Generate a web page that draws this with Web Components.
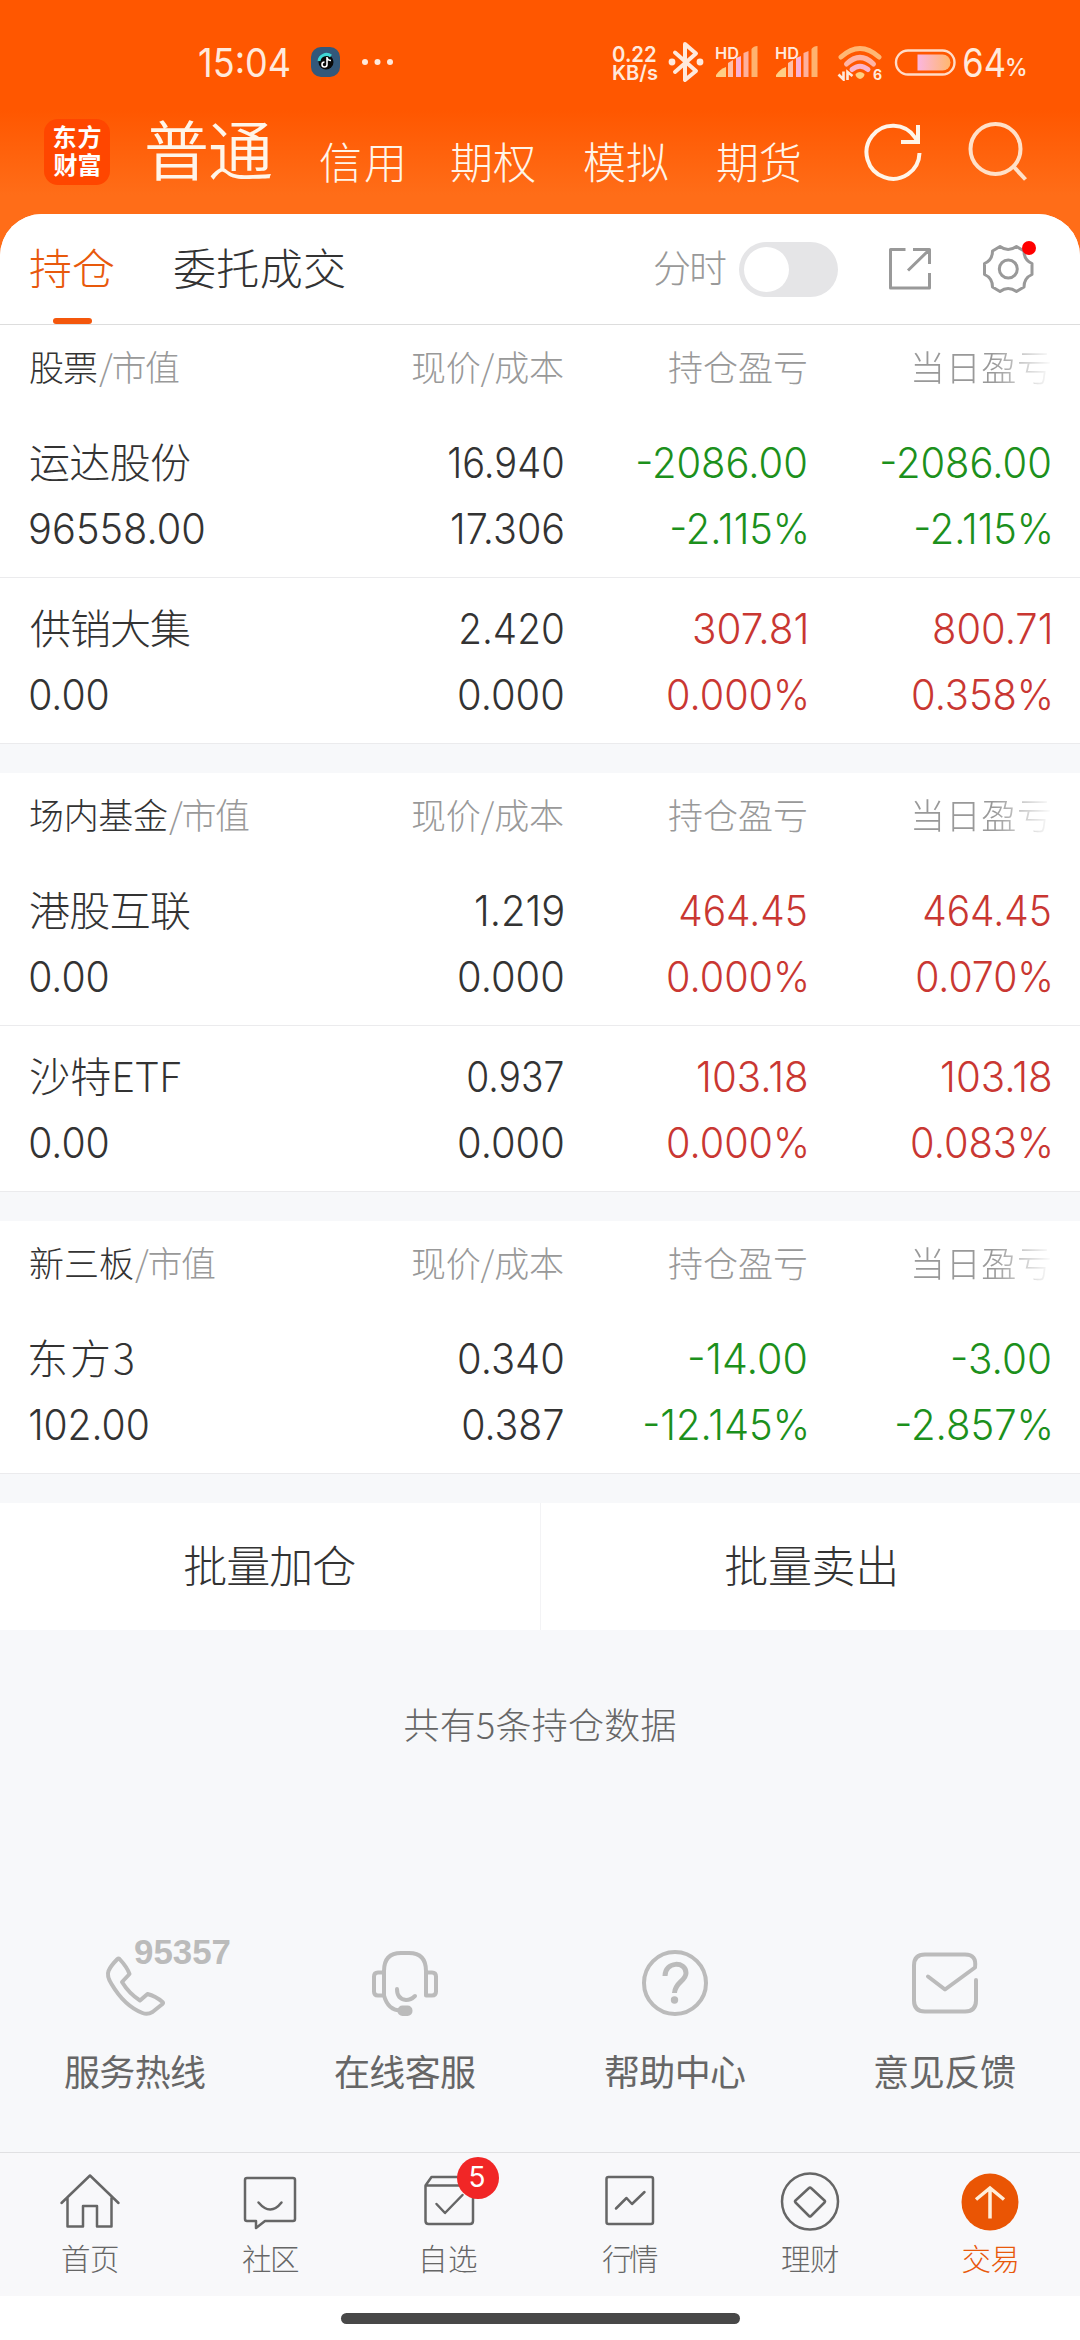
<!DOCTYPE html>
<html lang="zh-CN">
<head>
<meta charset="utf-8">
<title>交易</title>
<style>
    body {
        margin: 0;
        font-family: "Noto Sans CJK SC", sans-serif;
        font-weight: 300;
        color: #333;
        background: #fff;
    }
</style>
</head>
<body>
<trade-page></trade-page>

<script>
const define = (name, html, setup) => {
    const template = document.createElement('template');
    template.innerHTML = html;
    customElements.define(name, class extends HTMLElement {
        constructor() {
            super();
            this.attachShadow({ mode: 'open' }).appendChild(template.content.cloneNode(true));
        }
        connectedCallback() {
            if (setup) setup(this, this.shadowRoot);
        }
    });
};

// Text whose drawn width is given by w. Chinese is spaced out, numbers (num) are scaled.
const ctx = document.createElement('canvas').getContext('2d');

class FitText extends HTMLElement {
    constructor() {
        super();
        this.attachShadow({ mode: 'open' }).innerHTML = `
            <style>
                :host { display: block; flex: none; line-height: 1; text-align: left; }
                :host([num]) { font-family: Inter, sans-serif; }
                span { display: block; width: max-content; height: 1em; white-space: pre; transform-origin: 0 50%; }
            </style>
            <span></span>
        `;
    }

    connectedCallback() {
        const text = this.getAttribute('text');
        if (!text) return;
        const width = Number(this.getAttribute('w'));
        const span = this.shadowRoot.querySelector('span');
        const style = getComputedStyle(this);
        span.textContent = text;
        ctx.font = `${style.fontWeight} ${style.fontSize} ${style.fontFamily}`;
        const m = ctx.measureText(text);
        const ink = m.actualBoundingBoxLeft + m.actualBoundingBoxRight;
        this.style.width = width + 'px';
        if (this.hasAttribute('num')) {
            const scale = width / ink;
            span.style.transform = `translateX(${m.actualBoundingBoxLeft * scale}px) scaleX(${scale})`;
        } else {
            span.style.letterSpacing = (width - ink) / (text.length - 1) + 'px';
            span.style.transform = `translate(${m.actualBoundingBoxLeft}px, -0.078em)`;
        }
    }
}
customElements.define('fit-text', FitText);

define('signal-bars', `
    <style>
        :host { display: block; width: 45px; height: 36px; }
        svg { display: block; }
        text { font: 600 16px Inter, sans-serif; fill: #ffe9dc; }
    </style>
    <svg width="45" height="36" viewBox="715 44 45 36">
        <path d="M716 77v-2q4-6 10-8v10z" fill="#ffcf85"/>
        <path d="M728 77V63l5-3v17z" fill="#ffc0a8"/>
        <path d="M736 77V58l5-2v21z" fill="#fab2d4"/>
        <path d="M743.500 77V53l5-2v26z" fill="#ffb09c"/>
        <path d="M751.500 77V49q2-3 6-3v31z" fill="#ffb26e"/>
        <text x="715" y="58.500" textLength="24" lengthAdjust="spacingAndGlyphs">HD</text>
    </svg>
`);

define('status-bar', `
    <style>
        :host {
            display: flex;
            align-items: center;
            height: 86px;
            padding: 19px 0 0 199px;
            color: #ffe9dc;
            font-weight: 400;
        }
        svg { display: block; flex: none; }
        .time { font-size: 39px; }
        .app { margin-left: 9px; }
        .speed {
            display: flex;
            flex-direction: column;
            margin: 2px 0 0 219px;
            font-size: 20px;
            font-weight: 600;
        }
        .rate { margin-bottom: -2px; font-size: 22px; }
        .bt { margin-left: 9px; }
        .s1 { margin-left: 10px; }
        .s2 { margin-left: 15px; }
        .wifi { margin-left: 17px; }
        .wifi text { font: 700 14px Inter, sans-serif; fill: #ffe9dc; }
        .battery { margin-left: 11px; }
        .level { margin-left: 8px; font-size: 39px; }
        .percent { margin: 12px 0 0 3px; font-size: 24px; font-weight: 500; }
    </style>
    <fit-text num class="time" text="15:04" w="90"></fit-text>
    <svg class="app" width="96" height="36" viewBox="298 44 96 36">
        <g transform="translate(12 0)">
            <rect x="299" y="47" width="29" height="30" rx="10" fill="#33587a"/>
            <circle cx="314" cy="62" r="7.500" fill="#0a0a0a"/>
            <path d="M307 61a7.500 7.500 0 0 1 12-5" fill="none" stroke="#3fd7d5" stroke-width="3"/>
            <path d="M315 57v7.500a2.500 2.500 0 1 1-2.500-2.500M315 58q1 2.500 4 2.500" fill="none" stroke="#fff" stroke-width="1.600"/>
        </g>
        <g fill="#ffe9dc"><circle cx="365" cy="62" r="3"/><circle cx="377.500" cy="62" r="3"/><circle cx="390" cy="62" r="3"/></g>
    </svg>
    <div class="speed">
        <fit-text num class="rate" text="0.22" w="43"></fit-text>
        <fit-text num text="KB/s" w="45"></fit-text>
    </div>
    <svg class="bt" width="38" height="42" viewBox="667 41 38 42">
        <path d="M675 52.500 696 71l-11 9V44l11 9.500L675 72" fill="none" stroke="#ffe9dc" stroke-width="4" stroke-linejoin="round" stroke-linecap="round"/>
        <circle cx="672" cy="62" r="3.400" fill="#ffe9dc"/>
        <circle cx="700" cy="62" r="3.400" fill="#ffe9dc"/>
    </svg>
    <signal-bars class="s1"></signal-bars>
    <signal-bars class="s2"></signal-bars>
    <svg class="wifi" width="46" height="38" viewBox="837 43 46 38">
        <g fill="none" stroke-width="5" stroke-linecap="round">
            <path d="M841 57q19-17 38 0" stroke="#ffb774"/>
            <path d="M846.500 64q13.500-13 27 0" stroke="#ffb3a4"/>
            <path d="M852 69.500q8-6.500 16 0" stroke="#fbb4cc"/>
        </g>
        <path d="M855.500 74q4.500-4 9 0 0 3.500-4.500 5-4.500-1.500-4.500-5z" fill="#ffd080"/>
        <path d="M843.500 71.500v8l-5-5M847.500 80v-8l5 4" fill="none" stroke="#ffe9dc" stroke-width="2.600"/>
        <text x="873" y="79.500">6</text>
    </svg>
    <svg class="battery" width="62" height="28" viewBox="893.500 48.500 62 28">
        <defs>
            <linearGradient id="charge">
                <stop offset="0" stop-color="#fbb6e0"/>
                <stop offset="1" stop-color="#ffb76e"/>
            </linearGradient>
        </defs>
        <rect x="895.500" y="51" width="58.500" height="24" rx="12" fill="none" stroke="#ffdcc8" stroke-width="2.400"/>
        <path d="M917 55h25a8 8 0 0 1 0 16h-25z" fill="url(#charge)"/>
    </svg>
    <fit-text num class="level" text="64" w="40"></fit-text>
    <fit-text num class="percent" text="%" w="19"></fit-text>
`);

define('account-bar', `
    <style>
        :host {
            display: flex;
            align-items: center;
            height: 94px;
            padding: 0 0 15px 44px;
            color: #fff5e9;
        }
        .logo {
            display: flex;
            flex: none;
            flex-direction: column;
            align-items: center;
            justify-content: center;
            gap: 4px;
            width: 66px;
            height: 66px;
            border-radius: 14px;
            background: #ff4600;
            color: #fff;
            font-size: 24px;
            font-weight: 700;
        }
        .current { margin: 1px 12px 0 37px; font-size: 65px; font-weight: 350; }
        .account { margin: 22px 0 0 49px; font-size: 43px; }
        .account.first { margin-left: 37px; }
        .refresh { margin-left: 62px; }
        .search { margin-left: 44px; }
        svg { display: block; flex: none; fill: none; stroke-width: 4; }
    </style>
    <div class="logo">
        <fit-text text="东方" w="47"></fit-text>
        <fit-text text="财富" w="47"></fit-text>
    </div>
    <fit-text class="current" text="普通" w="124"></fit-text>
    <fit-text class="account first" text="信用" w="82"></fit-text>
    <fit-text class="account" text="期权" w="84"></fit-text>
    <fit-text class="account" text="模拟" w="84"></fit-text>
    <fit-text class="account" text="期货" w="83"></fit-text>
    <svg class="refresh" width="62" height="62" viewBox="861 121 62 62" stroke="#fff5e9">
        <path d="M918.500 153A26.500 26.500 0 1 1 914 137.500L917 142"/>
        <path d="M917 125v17h-17"/>
    </svg>
    <svg class="search" width="62" height="62" viewBox="967 121 62 62" stroke="#ffe0c8">
        <circle cx="994.500" cy="149" r="25"/>
        <path d="m1012.500 166.500 12 13"/>
    </svg>
`);

define('tab-bar', `
    <style>
        :host {
            display: flex;
            align-items: center;
            box-sizing: border-box;
            height: 111px;
            padding-left: 30px;
            border-bottom: 1px solid #ddd;
            font-size: 43px;
        }
        .tab {
            display: flex;
            flex-direction: column;
            align-items: center;
            justify-content: space-between;
            box-sizing: border-box;
            height: 110px;
            padding-top: 34px;
        }
        .tab + .tab { margin-left: 60px; }
        .active { color: #e8590c; }
        .active::after {
            content: "";
            width: 39px;
            height: 6px;
            border-radius: 3px;
            background: #f4570c;
        }
        .label { margin-left: 309px; font-size: 38px; color: #999; }
        .toggle {
            box-sizing: border-box;
            width: 99px;
            height: 55px;
            margin-left: 13px;
            padding: 5px;
            border-radius: 28px;
            background: #e5e5e7;
        }
        .toggle::before {
            content: "";
            display: block;
            width: 45px;
            height: 45px;
            border-radius: 50%;
            background: #fff;
        }
        svg { display: block; flex: none; fill: none; stroke: #999; stroke-width: 3; stroke-linejoin: round; }
        .share { margin-left: 49px; }
        .gear { margin-left: 47px; }
    </style>
    <div class="tab active"><fit-text text="持仓" w="84"></fit-text></div>
    <div class="tab"><fit-text text="委托成交" w="171"></fit-text></div>
    <fit-text class="label" text="分时" w="72"></fit-text>
    <div class="toggle"></div>
    <svg class="share" width="46" height="46" viewBox="887 246 46 46">
        <path d="M905.500 249.500h-15v38.500H929.500V273M913 249.500h16.500V264M929 250l-21 20.500"/>
    </svg>
    <svg class="gear" width="60" height="60" viewBox="980 239 60 60">
        <path d="M1000 246.500q8 6 16.500 0l7.500 4.500q0 9 8 12.500v11q-8 3.500-8 12.500l-7.500 4.500q-8.500-6-16.500 0l-7.500-4.500q0-9-8-12.500v-11q8-3.500 8-12.500z"/>
        <circle cx="1008.300" cy="269" r="9"/>
        <circle cx="1029" cy="248" r="7" fill="#f00" stroke="none"/>
    </svg>
`);

const numberCell = (value, cls = '') => {
    const [text, w] = value.split('|');
    return `<fit-text num class="${cls}" text="${text}" w="${w}"></fit-text>`;
};

// name, market value, price, cost, profit, profit rate, day profit, day rate; every entry is text|width
define('holding-row', `
    <style>
        :host {
            display: grid;
            grid-template-columns: 290px 243px 243px 244px;
            grid-template-rows: 66px 66px;
            align-items: center;
            justify-items: end;
            box-sizing: border-box;
            height: 166px;
            padding: 18px 30px 0;
            border-bottom: 1px solid #ebebed;
            font-size: 42px;
        }
        .name { font-size: 41px; }
        .left { justify-self: start; }
        .up { color: #c93732; }
        .down { color: #1c901c; }
    </style>
`, (host, root) => {
    const cells = host.getAttribute('cells').split(' ');
    const [name, w] = cells[0].split('|');
    const trend = host.getAttribute('trend');
    root.innerHTML += `
        <fit-text class="name left" text="${name}" w="${w}"></fit-text>
        ${numberCell(cells[2])}
        ${numberCell(cells[4], trend)}
        ${numberCell(cells[6], trend)}
        ${numberCell(cells[1], 'left')}
        ${numberCell(cells[3])}
        ${numberCell(cells[5], trend)}
        ${numberCell(cells[7], trend)}
    `;
});

define('holding-group', `
    <style>
        :host { display: block; margin-bottom: 29px; background: #fff; }
        header {
            display: grid;
            grid-template-columns: 290px 243px 243px 244px;
            align-items: center;
            justify-items: end;
            height: 87px;
            padding: 0 30px;
            font-size: 35px;
            color: #999;
        }
        .title { display: flex; gap: 2px; justify-self: start; }
        .kind { color: #333; }
        .fade {
            -webkit-mask-image: linear-gradient(90deg, #000 58%, transparent 102%);
            mask-image: linear-gradient(90deg, #000 58%, transparent 102%);
        }
    </style>
    <header>
        <div class="title">
            <fit-text class="kind"></fit-text>
            <fit-text text="/市值" w="80"></fit-text>
        </div>
        <fit-text text="现价/成本" w="151"></fit-text>
        <fit-text text="持仓盈亏" w="137"></fit-text>
        <fit-text class="fade" text="当日盈亏" w="136"></fit-text>
    </header>
    <slot></slot>
`, (host, root) => {
    const kind = root.querySelector('.kind');
    const fresh = kind.cloneNode();
    fresh.setAttribute('text', host.getAttribute('kind'));
    fresh.setAttribute('w', host.getAttribute('w'));
    kind.replaceWith(fresh);
});

define('batch-actions', `
    <style>
        :host { display: flex; height: 127px; background: #fff; font-size: 44px; }
        div { display: flex; flex: 1; align-items: center; justify-content: center; }
        i { width: 1px; background: #f3f3f5; }
    </style>
    <div><fit-text text="批量加仓" w="171"></fit-text></div>
    <i></i>
    <div><fit-text text="批量卖出" w="170"></fit-text></div>
`);

define('service-item', `
    <style>
        :host { display: block; width: 270px; color: #666; font-size: 36px; font-weight: 400; }
        .label { display: flex; align-items: center; justify-content: center; height: 80px; }
    </style>
    <slot></slot>
    <div class="label"></div>
`, (host, root) => {
    root.querySelector('.label').innerHTML = `<fit-text text="${host.getAttribute('label')}" w="140"></fit-text>`;
});

define('service-list', `
    <style>
        :host { display: flex; height: 219px; padding-top: 111px; }
        svg { display: block; fill: none; stroke: #bbb; stroke-width: 4; stroke-linejoin: round; stroke-linecap: round; }
        text { font: 700 35px "Liberation Sans", sans-serif; fill: #bbb; stroke: none; }
    </style>
    <service-item label="服务热线">
        <svg width="270" height="100" viewBox="0 1933 270 100">
            <path d="M117.500 1959q-7 7-9 12-2 5 3 13 13 22 31 29 5 2 10-1l10-8q1-1 0-2-7-6-15-8l-7.500 6.500q-11-7-18-18.500l7.500-8q-2.500-7-10-15-1-1-2 0z"/>
            <text x="134" y="1964" textLength="97" lengthAdjust="spacingAndGlyphs">95357</text>
        </svg>
    </service-item>
    <service-item label="在线客服">
        <svg width="270" height="100" viewBox="0 1933 270 100">
            <path d="M114 1995.500V1971q0-18 17-18h8q17 0 17 18v24.500h6q4 0 4-4v-15q0-4-4-4h-6M114 1972.500h-6q-4 0-4 4v15q0 4 4 4h6q4 15 17 15"/>
            <path d="M127 1989q0 10 9 11 5 0 9-4"/>
            <rect x="129.500" y="2007.500" width="11" height="6.500" rx="3" fill="#bbb"/>
        </svg>
    </service-item>
    <service-item label="帮助中心">
        <svg width="270" height="100" viewBox="0 1933 270 100">
            <circle cx="135" cy="1983" r="31"/>
            <path d="M125 1976c0-15 21-15 21-3 0 8-11 9-11.500 20" stroke-width="5" stroke-linecap="butt"/>
            <circle cx="134.500" cy="2000" r="3.700" fill="#bbb" stroke="none"/>
        </svg>
    </service-item>
    <service-item label="意见反馈">
        <svg width="270" height="100" viewBox="0 1933 270 100">
            <path d="M118 1976.500l17 13 30-22q2-13-10-13H115q-11 0-11 11v35q0 11 11 11h40q11 0 11-11v-20.500"/>
        </svg>
    </service-item>
`);

define('nav-item', `
    <style>
        :host { display: block; width: 180px; color: #666; font-size: 29.500px; }
        :host([active]) { color: #e8590c; }
        .label { display: flex; align-items: center; justify-content: center; height: 37px; }
    </style>
    <slot></slot>
    <div class="label"></div>
`, (host, root) => {
    const w = host.getAttribute('w') || 56;
    root.querySelector('.label').innerHTML = `<fit-text text="${host.getAttribute('label')}" w="${w}"></fit-text>`;
});

define('bottom-nav', `
    <style>
        :host {
            display: flex;
            box-sizing: border-box;
            height: 144px;
            border-top: 1px solid #e0e0e2;
            background: #f8f8fa;
        }
        svg { display: block; fill: none; stroke: #666; stroke-width: 2.500; stroke-linejoin: round; stroke-linecap: round; }
        text { font: 400 28px Inter, sans-serif; fill: #fff; stroke: none; text-anchor: middle; }
    </style>
    <nav-item label="首页">
        <svg width="180" height="88" viewBox="0 2153 180 88">
            <path d="M61.500 2203 90 2175.500l28.500 27.500M67.500 2198v28.500H83V2206h14v20.500h14.500V2198"/>
        </svg>
    </nav-item>
    <nav-item label="社区">
        <svg width="180" height="88" viewBox="0 2153 180 88">
            <path d="M67 2178h46q2 0 2 2v39q0 2-2 2H85l-9 7v-7h-9q-2 0-2-2v-39q0-2 2-2z"/>
            <path d="M78.500 2202.500q12 14 23 0"/>
        </svg>
    </nav-item>
    <nav-item label="自选" w="54">
        <svg width="180" height="88" viewBox="0 2153 180 88">
            <path d="M65.500 2185.500h47.500V2221q0 3-3 3H68.500q-3 0-3-3zl6-8.500H110M76.500 2204l8.500 9 17.500-18"/>
            <circle cx="118" cy="2178" r="21" fill="#f12626" stroke="none"/>
            <text x="117" y="2187">5</text>
        </svg>
    </nav-item>
    <nav-item label="行情">
        <svg width="180" height="88" viewBox="0 2153 180 88">
            <rect x="66.500" y="2177" width="46.500" height="47" rx="2"/>
            <path d="m76 2208.500 10.500-10.500 5.500 6 12.500-12"/>
        </svg>
    </nav-item>
    <nav-item label="理财">
        <svg width="180" height="88" viewBox="0 2153 180 88">
            <circle cx="90" cy="2201.500" r="28"/>
            <path d="m89 2188-13.500 12.500q-1 1 0 2L89 2216q1 1 2 0l13.500-13.500q1-1 0-2L91 2188q-1-1-2 0z"/>
        </svg>
    </nav-item>
    <nav-item label="交易" w="55" active>
        <svg width="180" height="88" viewBox="0 2153 180 88">
            <circle cx="90" cy="2202" r="28.500" fill="#ea5504" stroke="none"/>
            <path d="M76 2199.500 90 2188l14 11.500M90 2188v30.500" stroke="#ffeeda" stroke-width="3.500" stroke-linecap="butt" stroke-linejoin="miter"/>
        </svg>
    </nav-item>
`);

define('trade-page', `
    <style>
        :host {
            display: flex;
            flex-direction: column;
            width: 1080px;
            height: 2340px;
            overflow: hidden;
            background: linear-gradient(#ff5700 110px, #ff6d18 195px) 0 0 / 100% 270px no-repeat, #f7f8fa;
        }
        .top { height: 214px; }
        main { flex: none; background: #f7f8fa; border-radius: 42px 42px 0 0; overflow: hidden; }
        tab-bar { background: #fff; }
        .count {
            display: flex;
            align-items: center;
            justify-content: center;
            height: 192px;
            font-size: 36px;
            color: #666;
        }
        .home { display: flex; justify-content: center; flex: 1; padding-top: 17px; background: #fff; }
        .home i { width: 399px; height: 11px; border-radius: 6px; background: #484848; }
    </style>
    <div class="top">
        <status-bar></status-bar>
        <account-bar></account-bar>
    </div>
    <main>
        <tab-bar></tab-bar>
        <holding-group kind="股票" w="67">
            <holding-row trend="down" cells="运达股份|160 96558.00|174 16.940|114 17.306|111 -2086.00|168 -2.115%|134 -2086.00|168 -2.115%|134"></holding-row>
            <holding-row trend="up" cells="供销大集|160 0.00|78 2.420|102 0.000|104 307.81|112 0.000%|138 800.71|116 0.358%|137"></holding-row>
        </holding-group>
        <holding-group kind="场内基金" w="137">
            <holding-row trend="up" cells="港股互联|160 0.00|78 1.219|87 0.000|104 464.45|126 0.000%|138 464.45|126 0.070%|133"></holding-row>
            <holding-row trend="up" cells="沙特ETF|150 0.00|78 0.937|95 0.000|104 103.18|108 0.000%|138 103.18|108 0.083%|138"></holding-row>
        </holding-group>
        <holding-group kind="新三板" w="103">
            <holding-row trend="down" cells="东方3|103 102.00|118 0.340|104 0.387|100 -14.00|116 -12.145%|161 -3.00|97 -2.857%|153"></holding-row>
        </holding-group>
        <batch-actions></batch-actions>
        <div class="count"><fit-text text="共有5条持仓数据" w="271"></fit-text></div>
        <service-list></service-list>
    </main>
    <bottom-nav></bottom-nav>
    <div class="home"><i></i></div>
`);
</script>
</body>
</html>
